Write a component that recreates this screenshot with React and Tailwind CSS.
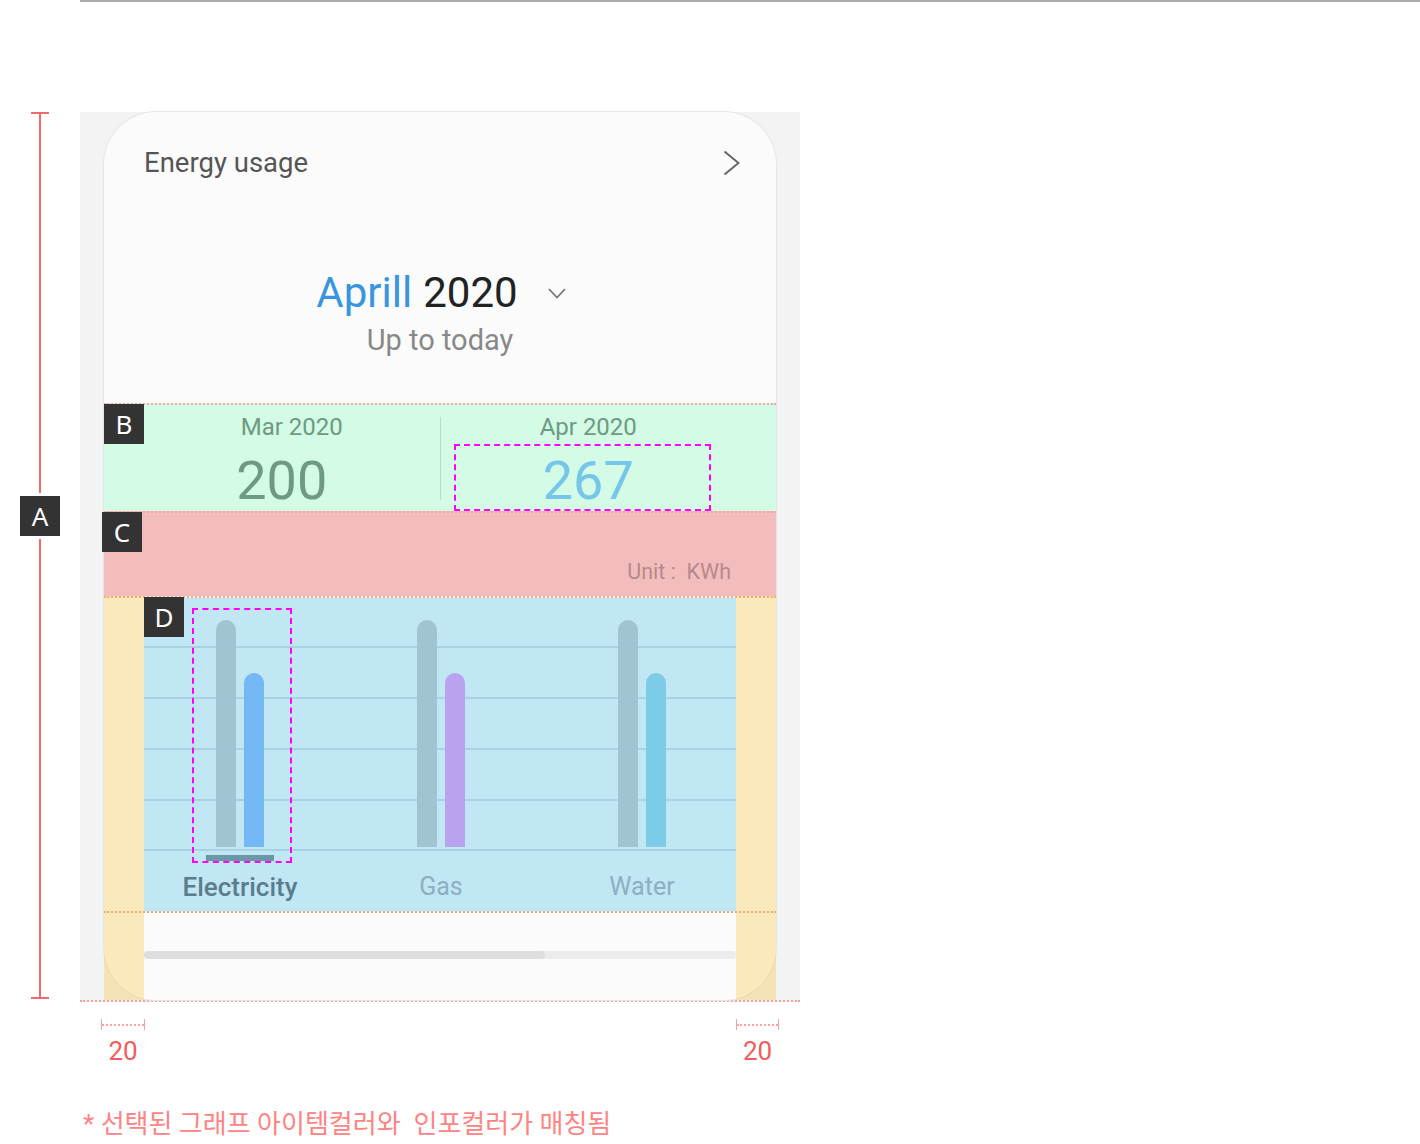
import React from 'react';

const bars = [
  { label: 'Electricity', color: 'bg-[#73b8f4]', active: true },
  { label: 'Gas', color: 'bg-[#b9a2f0]', active: false },
  { label: 'Water', color: 'bg-[#7ccbe8]', active: false },
];

function Tag({ children, className }) {
  return (
    <div
      className={
        'absolute w-[40px] h-[40px] bg-[#333333] text-white flex items-center justify-center text-[26px] leading-none font-["Noto_Sans",sans-serif] ' +
        className
      }
    >
      {children}
    </div>
  );
}

function Bracket() {
  return (
    <div className="flex items-center h-[11px]">
      <div className="w-px h-[11px] bg-[#f7a3a3]" />
      <div className="flex-1 border-t-2 border-dotted border-[#f7a3a3]" />
      <div className="w-px h-[11px] bg-[#f7a3a3]" />
    </div>
  );
}

export default function App() {
  return (
    <div className="relative w-[1420px] h-[1144px] bg-white font-['Roboto',sans-serif]">
      <div className="ml-[80px] h-[2px] bg-[#ababab]" />

      <div className="flex mt-[110px]">
        {/* A annotation */}
        <div className="relative w-[80px] h-[887px] flex flex-col items-center">
          <div className="w-[18px] h-[2px] bg-[#f06a6a]" />
          <div className="w-[2px] flex-1 bg-[#f06a6a]" />
          <div className="w-[18px] h-[2px] bg-[#f06a6a]" />
          <div className="absolute left-[20px] top-[381px] py-[3px] bg-white">
            <div className="w-[40px] h-[40px] bg-[#333333] text-white flex items-center justify-center text-[26px] leading-none font-['Noto_Sans',sans-serif]">
              A
            </div>
          </div>
        </div>

        {/* phone panel */}
        <div className="w-[720px] h-[890px] bg-[#f3f3f3] px-[24px] border-b-2 border-dotted border-[#f7a3a3]">
          <div className="relative h-full rounded-[52px] bg-[#fbfbfb] shadow-[0_0_0_1px_#e6e6e6] flex flex-col">
            {/* header */}
            <div className="h-[100px] pt-[1px] flex items-center justify-between pl-[40px] pr-[36px]">
              <span className="text-[27.5px] leading-none text-[#555555]">Energy usage</span>
              <svg width="17" height="26" viewBox="0 0 17 26" fill="none">
                <polyline points="1.5,1.5 15.5,13 1.5,24.5" stroke="#666666" strokeWidth="2" />
              </svg>
            </div>

            {/* date */}
            <div className="h-[191px] pt-[60px] flex flex-col items-center">
              <div className="flex items-center pl-[2px]">
                <span className="text-[42px] leading-none text-[#3896e0]">Aprill</span>
                <span className="text-[42px] leading-none text-[#222222] ml-[11px]">2020</span>
                <svg className="ml-[30px]" width="18" height="11" viewBox="0 0 18 11" fill="none">
                  <polyline points="1,1 9,9.5 17,1" stroke="#777777" strokeWidth="1.8" />
                </svg>
              </div>
              <div className="mt-[12px] text-[29px] leading-none text-[#888888]">Up to today</div>
            </div>

            {/* B */}
            <div className="relative h-[108px] border-t-2 border-dotted border-[#f5a3a3] bg-[#d3fbe6] flex px-[40px]">
              <Tag className="left-0 top-[-1px]">B</Tag>
              <div className="flex-1 flex flex-col items-center pt-[10px]">
                <span className="text-[24px] leading-none text-[#6d9a80]">Mar 2020</span>
                <span className="mt-[15px] mr-[20px] text-[54px] leading-none text-[#6e9982]">200</span>
              </div>
              <div className="w-px h-[83px] mt-[12px] bg-[#b7ddc8]" />
              <div className="relative flex-1 flex flex-col items-center pt-[10px]">
                <span className="text-[24px] leading-none text-[#6d9a80]">Apr 2020</span>
                <span className="mt-[15px] text-[54px] leading-none text-[#76c6ea]">267</span>
                <div className="absolute left-[13px] top-[39px] w-[257px] h-[67px] border-2 border-dashed border-[#ff00ff]" />
              </div>
            </div>

            {/* C */}
            <div className="relative h-[85px] border-t-2 border-dotted border-[#f5a3a3] bg-[#f4bdbd] flex items-end justify-end pr-[45px] pb-[14px]">
              <Tag className="left-[-2px] top-[-1px]">C</Tag>
              <span className="text-[21.5px] leading-none text-[#b58a8a]">Unit :&nbsp; KWh</span>
            </div>

            {/* D */}
            <div className="relative h-[315px] border-t-2 border-dotted border-[#f6a57f] px-[40px]">
              <div className="relative h-full bg-[#c1e6f4]">
                <div className="absolute inset-x-0 top-[48px] h-[2px] bg-[#a9d3e3]" />
                <div className="absolute inset-x-0 top-[99px] h-[2px] bg-[#a9d3e3]" />
                <div className="absolute inset-x-0 top-[150px] h-[2px] bg-[#a9d3e3]" />
                <div className="absolute inset-x-0 top-[201px] h-[2px] bg-[#a9d3e3]" />
                <div className="absolute inset-x-0 top-[251px] h-[2px] bg-[#a9d3e3]" />
                <div className="relative flex justify-center pl-[2px]">
                  {bars.map((b) => (
                    <div key={b.label} className="relative w-[201px] shrink-0 flex flex-col items-center">
                      <div className="h-[249px] flex items-end gap-[8px]">
                        <div className="w-[20px] h-[227px] rounded-t-full bg-[#a0c4d2]" />
                        <div className={'w-[20px] h-[174px] rounded-t-full ' + b.color} />
                      </div>
                      <div className={'mt-[8px] w-[68px] h-[6px] ' + (b.active ? 'bg-[#6c97a6]' : 'bg-transparent')} />
                      <span
                        className={
                          'mt-[13px] leading-none ' +
                          (b.active ? 'text-[26px] font-medium text-[#5a7d8d]' : 'text-[25px] text-[#8db0c0]')
                        }
                      >
                        {b.label}
                      </span>
                      {b.active && (
                        <div className="absolute left-[52px] top-[10px] w-[100px] h-[255px] border-2 border-dashed border-[#ff00ff]" />
                      )}
                    </div>
                  ))}
                </div>
              </div>
              <Tag className="left-[40px] top-[-1px]">D</Tag>
            </div>

            {/* scroll */}
            <div className="flex-1 border-t-2 border-dotted border-[#f6a57f] px-[40px] pt-[38px]">
              <div className="h-[8px] rounded-full bg-[#ececec]">
                <div className="w-[401px] h-full rounded-full bg-[#dedede]" />
              </div>
            </div>

            <div className="absolute left-0 top-[484px] bottom-0 w-[40px] bg-[#fbbf33]/30" />
            <div className="absolute right-0 top-[484px] bottom-0 w-[40px] bg-[#fbbf33]/30" />
          </div>
        </div>
      </div>

      {/* 20 / 20 */}
      <div className="flex mt-[17px] pl-[101px]">
        <div className="w-[44px] flex flex-col">
          <Bracket />
          <span className="mt-[8px] text-center text-[26px] leading-none text-[#f25c5c]">20</span>
        </div>
        <div className="w-[591px]" />
        <div className="w-[43px] flex flex-col">
          <Bracket />
          <span className="mt-[8px] text-center text-[26px] leading-none text-[#f25c5c]">20</span>
        </div>
      </div>

      <div className="mt-[47px] pl-[83px] text-[26px] leading-none text-[#ff8383] font-['Roboto','Noto_Sans_CJK_KR',sans-serif] whitespace-pre">
        * 선택된 그래프 아이템컬러와  인포컬러가 매칭됨
      </div>
    </div>
  );
}
